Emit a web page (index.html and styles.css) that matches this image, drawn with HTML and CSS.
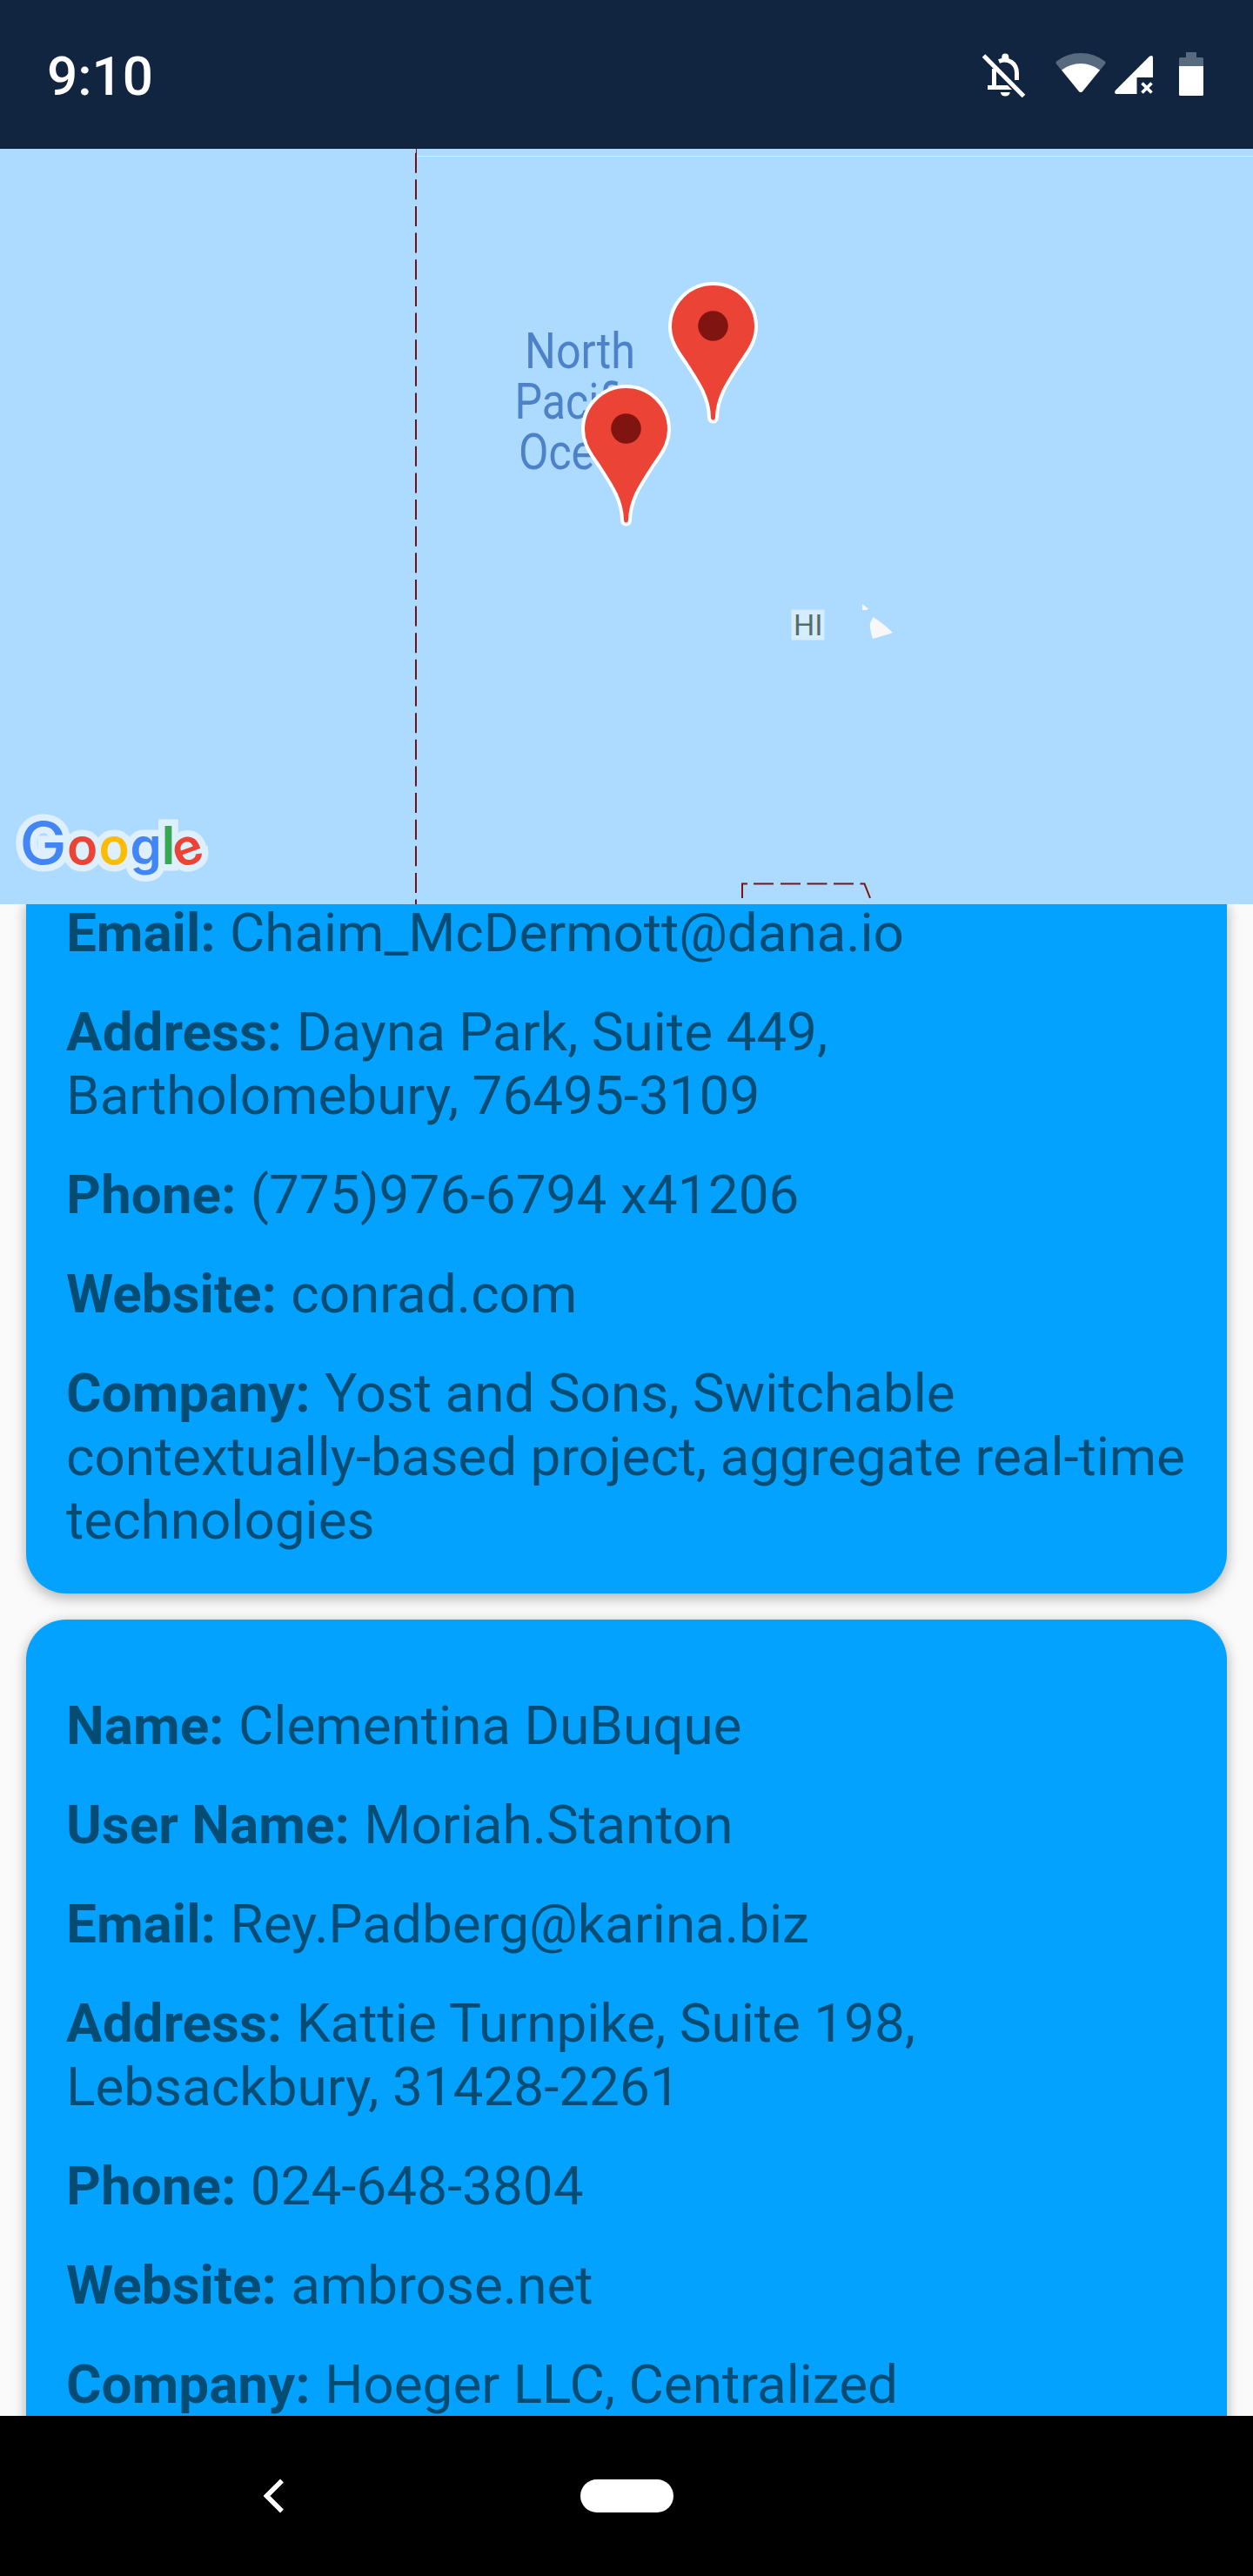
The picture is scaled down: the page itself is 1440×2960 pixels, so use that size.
FILE: index.html
```html
<!DOCTYPE html>
<html lang="en">
<head>
<meta charset="utf-8">
<title>Users</title>
<link rel="stylesheet" href="styles.css">
</head>
<body>
<div class="screen">
  <header class="status">
    <span class="clock">9:10</span>
    <svg class="status-icons" width="260" height="54" viewBox="0 0 260 54">
      <g fill="none" stroke="#fff" stroke-width="5">
        <path d="M14.500 17V41"/>
        <path d="M7 40.500H40"/>
        <path d="M20 10.500C31 6 40.500 13 40.500 24V32"/>
        <path d="M3 4L49 50" stroke="#112540" stroke-width="10"/>
        <path d="M14.500 19V38"/>
        <path d="M2.500 4L48.500 50.500"/>
      </g>
      <path d="M23.300 9V5.500a4 4 0 0 1 8 0V9zM21.800 46h11a5.600 5.600 0 0 1-11 0z" fill="#fff"/>
      <path d="M86 10.500Q85 12 86 13.500L111.500 44.500Q114 47.500 116.500 44.500L142 13.500Q143 12 142 10.500Q130 1 114 1T86 10.500z" fill="#586a7d"/>
      <path d="M92 20.500Q102 13 114 13T136 20.500L116.500 44.500Q114 47.500 111.500 44.500z" fill="#fff"/>
      <path d="M153.800 44L193 4.700Q197 2.700 197 6V29H178.500V48H155Q151.800 47 153.800 44z" fill="#fff"/>
      <path d="M184.500 35.500l11 11M195.500 35.500l-11 11" fill="none" stroke="#fff" stroke-width="3.600"/>
      <path d="M235 0h12v6h6.500q1.500 0 1.500 1.500V16H227V7.500Q227 6 228.500 6H235z" fill="#586a7d"/>
      <path d="M227 16h28v32.500q0 1.500-1.500 1.500h-25q-1.500 0-1.500-1.500z" fill="#fff"/>
    </svg>
  </header>

  <section class="map">
    <svg class="map-canvas" width="1440" height="868" viewBox="0 171 1440 868">
      <defs>
        <g id="pin">
          <path d="M0 0C-3 0-4.300-1.500-4.500-5C-5-28-16-44-31-67C-41-81-49.500-93-49.500-109A49.500 49.500 0 0 1 49.500-109C49.500-93 41-81 31-67C16-44 5-28 4.500-5C4.300-1.500 3 0 0 0z" fill="#eb4335" stroke="#fff" stroke-width="4"/>
          <circle cy="-110" r="17.300" fill="#801410"/>
        </g>
        <g id="brand" class="brand">
          <text class="cap" transform="translate(22.500 993) scale(1.080 1)" fill="#4285f4">G</text>
          <text y="993"><tspan x="77" fill="#eb4335">o</tspan><tspan x="113.500" fill="#fbbc05">o</tspan><tspan x="149.500" fill="#4285f4">g</tspan><tspan class="stem" x="185.500" fill="#34a853">l</tspan><tspan x="205" y="998.500" rotate="-20" fill="#eb4335">e</tspan></text>
        </g>
      </defs>
      <path d="M478 179.500H1440" stroke="#e9eadf" stroke-width="1"/>
      <path d="M478.500 171V179" stroke="#801014" stroke-width="1"/>
      <path d="M478 175.700V1039" stroke="#731015" stroke-width="2" stroke-dasharray="23 7.640"/>
      <path d="M853 1032V1015.500H859M866 1015.500h23M897 1015.500h23M927.500 1015.500h23M958 1015.500h23M988.500 1015.500H993.500L1000 1032" fill="none" stroke="#801014" stroke-width="2"/>
      <g class="ocean">
        <text x="603" y="422.500" textLength="127" lengthAdjust="spacingAndGlyphs">North</text>
        <text x="591.500" y="481" textLength="151" lengthAdjust="spacingAndGlyphs">Pacific</text>
        <text x="596" y="539" textLength="142" lengthAdjust="spacingAndGlyphs">Ocean</text>
      </g>
      <rect x="909.500" y="700.500" width="38" height="35" fill="#d6ecff"/>
      <text class="state" x="912" y="730">HI</text>
      <path d="M991 694l7 5.500-1.500 1.500H991zM1003.500 709Q1015 716 1026 727Q1014 731 1003 734Q999 721 1000 716z" fill="#f7f7f7"/>
      <use href="#pin" x="819.500" y="484.500"/>
      <use href="#pin" x="719.500" y="602.500"/>
      <use href="#brand" stroke="#def0fe" stroke-width="15"/>
      <use href="#brand"/>
    </svg>
  </section>

  <main class="users">
    <article class="card card-scrolled">
      <p class="tight"><b>Email:</b> Chaim_McDermott@dana.io</p>
      <p><b>Address:</b> Dayna Park, Suite 449,<br>Bartholomebury, 76495-3109</p>
      <p><b>Phone:</b> <span class="loose">(775)976-6794 x41206</span></p>
      <p><b>Website:</b> conrad.com</p>
      <p><b>Company:</b> Yost and Sons, Switchable<br><span class="tight">contextually-based project, aggregate real-time</span><br>technologies</p>
    </article>
    <article class="card">
      <p><b>Name:</b> Clementina DuBuque</p>
      <p><b>User Name:</b> Moriah.Stanton</p>
      <p><b>Email:</b> Rey.Padberg@karina.biz</p>
      <p><b>Address:</b> Kattie Turnpike, Suite 198,<br>Lebsackbury, 31428-2261</p>
      <p><b>Phone:</b> 024-648-3804</p>
      <p><b>Website:</b> ambrose.net</p>
      <p><b>Company:</b> Hoeger LLC, Centralized</p>
    </article>
  </main>

  <nav class="navbar">
    <svg class="back" width="24" height="40" viewBox="0 0 24 40"><path d="M21 2.500L3.500 20L21 37.500" fill="none" stroke="#fff" stroke-width="5.500"/></svg>
    <span class="home"></span>
    <span></span>
  </nav>
</div>
</body>
</html>
```
FILE: styles.css
```css
* { box-sizing: border-box; }
body { margin: 0; font-family: Roboto, sans-serif; background: #fafafa; }
.screen { width: 1440px; height: 2960px; display: flex; flex-direction: column; overflow: hidden; }

.status { flex: none; height: 171px; background: #112540; display: flex; justify-content: space-between; align-items: flex-start; padding: 60px 52px 0 54px; }
.clock { color: #fff; font-size: 62px; font-weight: 500; line-height: 56px; }
.status-icons { display: block; }

.map { flex: none; height: 868px; background: #addaff; }
.map-canvas { display: block; }
.ocean { font-size: 57px; fill: #4e82c8; }
.state { font-size: 34px; fill: #546e6e; }
.brand { font-family: Inter, sans-serif; font-size: 58px; font-weight: 600; }
.brand .cap { font-size: 67px; font-weight: 500; }
.brand .stem { font-size: 61px; }

.users { flex: 1; min-height: 0; overflow: hidden; padding: 0 30px; display: flex; flex-direction: column; gap: 30px; }
.card { flex: none; background: #03a2fe; color: #034c74; border-radius: 46px; padding: 85px 46px 48px; box-shadow: 0 6px 16px rgba(0, 0, 0, .24), 0 0 14px rgba(0, 0, 0, .08); display: flex; flex-direction: column; gap: 41px; font-size: 62px; line-height: 73px; white-space: nowrap; }
.card-scrolled { margin-top: -4px; padding-top: 0; border-top-left-radius: 0; border-top-right-radius: 0; }
.card p { margin: 0; }
.card b { font-weight: 700; margin-right: 1px; }
.tight { letter-spacing: -.06px; }
.loose { letter-spacing: .1px; }

.navbar { flex: none; height: 184px; background: #000; display: grid; grid-template-columns: 630px 180px 630px; align-items: center; justify-items: center; }
.back { display: block; }
.home { width: 107px; height: 38px; border-radius: 19px; background: #fff; }
```
